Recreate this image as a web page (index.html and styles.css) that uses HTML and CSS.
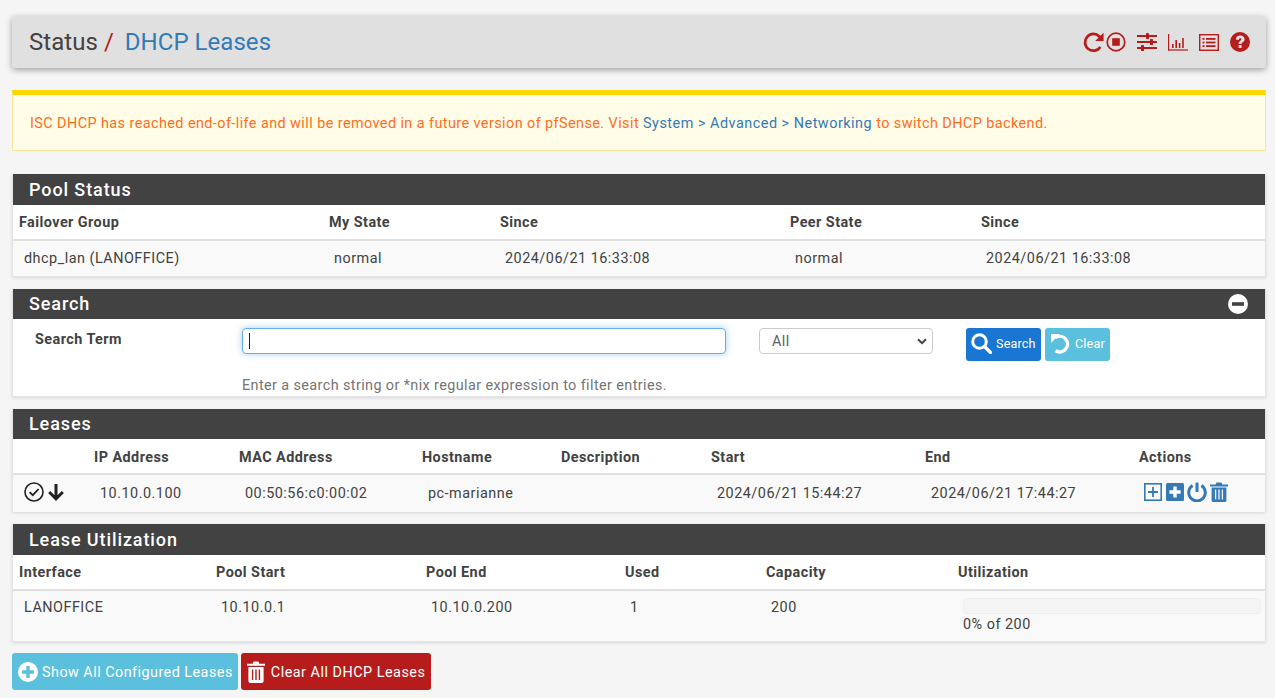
FILE: index.html
```html
<!DOCTYPE html>
<html lang="en">
<head>
<meta charset="utf-8">
<title>Status / DHCP Leases</title>
<link rel="stylesheet" href="styles.css">
</head>
<body>
<main class="page">
  <header class="crumbs">
    <h1 class="crumb-title"><span>Status</span><span class="crumb-sep">/</span><a class="crumb-link">DHCP Leases</a></h1>
    <nav class="crumb-icons">
      <svg class="ci ci-reload" viewBox="0 0 22 22"><path d="M17.6 15.2A8 8 0 1 1 16.6 5.2L19 7.6" fill="none" stroke="currentColor" stroke-width="2.6"/><path d="M20.6 1.6V9.6H12.6Z" fill="currentColor"/></svg>
      <svg class="ci ci-stop" viewBox="0 0 20 20"><circle cx="10" cy="10" r="8.8" fill="none" stroke="currentColor" stroke-width="1.7"/><rect x="6.2" y="6.2" width="7.6" height="7.6" fill="currentColor"/></svg>
      <svg class="ci ci-sliders" viewBox="0 0 20 18"><g fill="currentColor"><rect y="2" width="20" height="2"/><rect y="8" width="20" height="2"/><rect y="14" width="20" height="2"/><rect x="9" y="0" width="3" height="6" rx=".6"/><rect x="13" y="6" width="3" height="6" rx=".6"/><rect x="4" y="12" width="3" height="6" rx=".6"/></g></svg>
      <svg class="ci ci-chart" viewBox="0 0 20 17"><g fill="currentColor"><rect width="1.2" height="16.5"/><rect y="15.4" width="20" height="1.2"/><rect x="4" y="10" width="1.6" height="4"/><rect x="7.4" y="6" width="1.6" height="8"/><rect x="10.8" y="9" width="1.6" height="5"/><rect x="14.2" y="4" width="1.6" height="10"/></g></svg>
      <svg class="ci ci-list" viewBox="0 0 20 17"><rect x=".7" y=".7" width="18.6" height="15.6" fill="none" stroke="currentColor" stroke-width="1.4"/><g fill="currentColor"><rect x="3.5" y="4" width="2" height="1.8"/><rect x="3.5" y="7.6" width="2" height="1.8"/><rect x="3.5" y="11.2" width="2" height="1.8"/><rect x="7" y="4" width="9.5" height="1.8"/><rect x="7" y="7.6" width="9.5" height="1.8"/><rect x="7" y="11.2" width="9.5" height="1.8"/></g></svg>
      <svg class="ci ci-help" viewBox="0 0 20 20"><circle cx="10" cy="10" r="10" fill="currentColor"/><path d="M5.8 7.4C6 4.8 7.9 3.4 10.2 3.4 12.6 3.4 14.6 4.9 14.6 7.2 14.6 10 11.6 10 11.6 12H8.6C8.6 8.9 11.4 8.8 11.4 7.3 11.4 6.7 10.9 6.2 10.2 6.2 9.4 6.2 8.9 6.8 8.7 7.9Z" fill="#e0e0e0"/><rect x="8.6" y="13" width="3" height="3" fill="#e0e0e0"/></svg>
    </nav>
  </header>

  <div class="alert">ISC DHCP has reached end-of-life and will be removed in a future version of pfSense. Visit <a class="link">System &gt; Advanced &gt; Networking</a> to switch DHCP backend.</div>

  <section class="panel panel-pool">
    <h2 class="panel-head">Pool Status</h2>
    <table class="grid">
      <colgroup><col class="w310"><col class="w171"><col class="w290"><col class="w191"><col></colgroup>
      <thead><tr><th>Failover Group</th><th>My State</th><th>Since</th><th>Peer State</th><th>Since</th></tr></thead>
      <tbody><tr><td>dhcp_lan (LANOFFICE)</td><td>normal</td><td>2024/06/21 16:33:08</td><td>normal</td><td>2024/06/21 16:33:08</td></tr></tbody>
    </table>
  </section>

  <section class="panel panel-search">
    <h2 class="panel-head panel-head-s">Search
      <svg class="collapse" viewBox="0 0 20 20"><circle cx="10" cy="10" r="10" fill="#fff"/><rect x="4" y="8.2" width="12" height="3.6" fill="#424242"/></svg>
    </h2>
    <div class="search-body">
      <label class="search-label">Search Term</label>
      <div class="search-main">
        <div class="search-row">
          <div class="fake-input"><span class="caret"></span></div>
          <div class="fake-select">All<svg class="chev" viewBox="0 0 10 7"><path d="M1 1.2 5 5.2 9 1.2" fill="none" stroke="#444" stroke-width="2"/></svg></div>
          <div class="search-btns">
            <button class="btn btn-blue"><svg class="bi-search" viewBox="0 0 21 21"><circle cx="8.5" cy="8.5" r="6.8" fill="none" stroke="#fff" stroke-width="3"/><path d="M13.5 13.5 19.5 19.5" stroke="#fff" stroke-width="3.2" stroke-linecap="round"/></svg>Search</button>
            <button class="btn btn-info"><svg class="bi-undo" viewBox="0 0 21 21"><path d="M5.4 4.6A7.8 7.8 0 1 1 5.6 17.8" fill="none" stroke="#fff" stroke-width="3.4"/><path d="M1 1 10 1 1 10Z" fill="#fff"/></svg>Clear</button>
          </div>
        </div>
        <p class="help">Enter a search string or *nix regular expression to filter entries.</p>
      </div>
    </div>
  </section>

  <section class="panel panel-leases">
    <h2 class="panel-head panel-head-s">Leases</h2>
    <table class="grid">
      <colgroup><col class="w75"><col class="w145"><col class="w183"><col class="w139"><col class="w150"><col class="w214"><col class="w214"><col></colgroup>
      <thead><tr><th></th><th>IP Address</th><th>MAC Address</th><th>Hostname</th><th>Description</th><th>Start</th><th>End</th><th>Actions</th></tr></thead>
      <tbody><tr>
        <td class="cell-status"><span class="icon-row">
          <svg class="si-check" viewBox="0 0 20 20"><circle cx="10" cy="10" r="9" fill="none" stroke="#212121" stroke-width="1.6"/><path d="M5.6 10.2 8.8 13.2 14.6 7" fill="none" stroke="#212121" stroke-width="1.8"/></svg>
          <svg class="si-down" viewBox="0 0 18 18"><path d="M9 1V15.5M2.2 9 9 15.8 15.8 9" fill="none" stroke="#212121" stroke-width="3"/></svg>
        </span></td>
        <td>10.10.0.100</td><td>00:50:56:c0:00:02</td><td>pc-marianne</td><td></td><td>2024/06/21 15:44:27</td><td>2024/06/21 17:44:27</td>
        <td class="cell-actions"><span class="icon-row icon-actions">
          <svg class="ai-a" viewBox="0 0 18 18"><rect x=".8" y=".8" width="16.4" height="16.4" fill="none" stroke="#337ab7" stroke-width="1.6"/><path d="M9 4V14M4 9H14" stroke="#337ab7" stroke-width="1.8"/></svg>
          <svg class="ai-b" viewBox="0 0 18 18"><rect width="18" height="18" rx="1.5" fill="#337ab7"/><path d="M9 3.4V14.6M3.4 9H14.6" stroke="#fff" stroke-width="3.4"/></svg>
          <svg class="ai-c" viewBox="0 0 20 20"><path d="M5.6 3.6A8.3 8.3 0 1 0 14.4 3.6" fill="none" stroke="#337ab7" stroke-width="3"/><path d="M10 .6V10" stroke="#337ab7" stroke-width="3"/></svg>
          <svg class="ai-d" viewBox="0 0 18 20"><g fill="#337ab7"><path d="M0 2.6H5.6L6.6.6H11.4L12.4 2.6H18V4.4H0Z"/><path d="M1.6 5.4H16.4V18.4Q16.4 20 14.8 20H3.2Q1.6 20 1.6 18.4Z"/></g><path d="M5.6 7.6V17.4M9 7.6V17.4M12.4 7.6V17.4" stroke="#f9f9f9" stroke-width="1.3"/></svg>
        </span></td>
      </tr></tbody>
    </table>
  </section>

  <section class="panel panel-util">
    <h2 class="panel-head">Lease Utilization</h2>
    <table class="grid">
      <colgroup><col class="w197"><col class="w210"><col class="w199"><col class="w141"><col class="w192"><col></colgroup>
      <thead><tr><th>Interface</th><th>Pool Start</th><th>Pool End</th><th>Used</th><th>Capacity</th><th>Utilization</th></tr></thead>
      <tbody><tr><td>LANOFFICE</td><td>10.10.0.1</td><td>10.10.0.200</td><td>1</td><td>200</td><td class="cell-util"><div class="progress"></div><span>0% of 200</span></td></tr></tbody>
    </table>
  </section>

  <div class="actions">
    <button class="btn btn-lg btn-info"><svg class="li-plus" viewBox="0 0 20 20"><circle cx="10" cy="10" r="10" fill="#fff"/><path d="M10 4V16M4 10H16" stroke="#5bc0de" stroke-width="3.4"/></svg>Show All Configured Leases</button>
    <button class="btn btn-lg btn-red"><svg class="li-trash" viewBox="0 0 18 22"><g fill="#fff"><path d="M0 2.8H5.6L6.6.6H11.4L12.4 2.8H18V4.8H0Z"/><path d="M1.4 6H16.6V20Q16.6 22 14.6 22H3.4Q1.4 22 1.4 20Z"/></g><path d="M5.6 8.4V19M9 8.4V19M12.4 8.4V19" stroke="#b71c1c" stroke-width="1.4"/></svg>Clear All DHCP Leases</button>
  </div>
</main>
</body>
</html>
```
FILE: styles.css
```css
* { box-sizing: border-box; }
html, body { margin: 0; height: 698px; overflow: hidden; }
body {
  background: #f5f5f5;
  color: #424242;
  font: 14.4px/1.42857 Roboto, "Liberation Sans", sans-serif;
  letter-spacing: .45px;
}
.page { padding: 16px 9px 0 12px; display: flex; flex-direction: column; }

.crumbs {
  height: 52px;
  background: #e0e0e0;
  border-radius: 3px;
  box-shadow: 0 2px 6px rgba(0,0,0,.35);
  display: flex;
  align-items: center;
  justify-content: space-between;
  padding: 0 16px 0 17px;
}
.crumb-title { margin: 0; font-size: 24px; font-weight: 400; line-height: 1; color: #424242; display: flex; letter-spacing: .04px; }
.crumb-sep { color: #b71c1c; margin: 0 11px 0 6px; }
.crumb-link, .link { color: #337ab7; }
.crumb-icons { display: flex; align-items: center; color: #b71c1c; }
.ci { display: block; }
.ci-reload { width: 23px; height: 23px; }
.ci-stop { width: 20px; height: 20px; margin-left: 1px; }
.ci-sliders { width: 20px; height: 18px; margin-left: 11px; }
.ci-chart { width: 20px; height: 17px; margin-left: 11px; }
.ci-list { width: 20px; height: 17px; margin-left: 11px; }
.ci-help { width: 20px; height: 20px; margin-left: 11px; }

.alert {
  margin-top: 22px;
  height: 61px;
  background: #fffde7;
  border: 1px solid #ffe39b;
  border-top: 5px solid #ffd600;
  color: #ff6d20;
  padding: 0 17px;
  line-height: 57px;
  letter-spacing: .43px;
}
.link { letter-spacing: .51px; }

.panel {
  background: #fff;
  border: 1px solid #e4e4e4;
  box-shadow: 0 1px 3px rgba(0,0,0,.12);
  border-top: 0;
}
.panel-pool { margin-top: 23px; height: 103px; }
.panel-search { margin-top: 12px; height: 108px; }
.panel-leases { margin-top: 12px; height: 103px; }
.panel-util { margin-top: 12px; height: 118px; }

.panel-head {
  margin: 0;
  height: 31px;
  background: #424242;
  color: #fff;
  font-size: 18px;
  font-weight: 500;
  line-height: 31px;
  letter-spacing: .9px;
  padding-left: 16px;
  position: relative;
}
.panel-head-s { height: 30px; line-height: 30px; }
.collapse { position: absolute; top: 5px; right: 17px; width: 20px; height: 20px; }

.grid { width: 100%; border-collapse: collapse; table-layout: fixed; }
.grid th {
  text-align: left;
  font-weight: 700;
  font-size: 14.4px;
  color: #424242;
  height: 35px;
  padding: 2px 6px 0;
  border-bottom: 2px solid #e0e0e0;
}
.grid td {
  padding: 2px 6px 0 11px;
  height: 36px;
  background: #f9f9f9;
  color: #424242;
  letter-spacing: .5px;
}
.panel-leases .grid th { padding-top: 4px; }
.panel-leases .grid td { height: 38px; padding-left: 12px; }
.panel-leases .grid .cell-status, .panel-leases .grid .cell-actions { padding-left: 11px; }
.panel-util .grid td { height: 51px; vertical-align: top; padding-top: 7px; }

.w310 { width: 310px; } .w171 { width: 171px; } .w290 { width: 290px; } .w191 { width: 191px; }
.w75 { width: 75px; } .w145 { width: 145px; } .w183 { width: 183px; } .w139 { width: 139px; }
.w150 { width: 150px; } .w214 { width: 214px; }
.w197 { width: 197px; } .w210 { width: 210px; } .w199 { width: 199px; } .w141 { width: 141px; } .w192 { width: 192px; }

.search-body { display: flex; padding-top: 9px; }
.search-label { width: 229px; padding: 2px 0 0 22px; font-weight: 700; line-height: 20px; color: #424242; }
.search-row { display: flex; align-items: flex-start; }
.fake-input {
  width: 484px; height: 26px;
  border: 1px solid #66afe9; border-radius: 4px; background: #fff;
  box-shadow: 0 0 7px rgba(102,175,233,.6);
  padding: 4px 6px;
}
.caret { display: block; width: 1px; height: 16px; background: #212121; }
.fake-select {
  width: 174px; height: 26px; margin-left: 33px;
  border: 1px solid #ccc; border-radius: 4px; background: #fff;
  padding: 1px 12px 0; line-height: 24px; color: #616161;
  display: flex; justify-content: space-between; align-items: center;
}
.chev { width: 10px; height: 7px; margin-right: -7px; }
.search-btns { display: flex; gap: 4px; margin-left: 33px; }
.btn {
  display: inline-flex; align-items: center;
  border: 0; border-radius: 3px; color: #fff;
  font: 400 12.6px Roboto, "Liberation Sans", sans-serif;
  letter-spacing: .15px;
  height: 33px; padding: 0 5px 2px;
}
.btn svg { flex: none; }
.btn-blue { background: #1976d2; width: 75px; }
.btn-info { background: #5bc0de; }
.btn-red { background: #b71c1c; }
.search-btns .btn-info { width: 65px; }
.bi-search { width: 21px; height: 21px; margin-right: 4px; }
.bi-undo { width: 21px; height: 21px; margin-right: 4px; }
.help { margin: 15px 0 0; color: #757575; line-height: 20px; letter-spacing: .4px; }

.icon-row { display: flex; align-items: center; margin-bottom: 5px; }
.si-check { width: 20px; height: 20px; }
.si-down { width: 18px; height: 18px; margin-left: 3px; }
.ai-a { width: 18px; height: 18px; }
.ai-b { width: 18px; height: 18px; margin-left: 4px; }
.ai-c { width: 20px; height: 20px; margin-left: 3px; }
.ai-d { width: 18px; height: 20px; margin-left: 3px; }

.progress { width: 298px; height: 16px; background: #f5f5f5; border: 1px solid #eee; border-radius: 4px; }
.cell-util span { display: block; margin-top: 1px; line-height: 20px; }

.actions { display: flex; gap: 3px; margin-top: 11px; }
.btn-lg { font-size: 14.4px; letter-spacing: .46px; height: 37px; padding: 1px 5px 0 6px; }
.btn-lg.btn-red { letter-spacing: .5px; padding-right: 6px; }
.li-plus { width: 20px; height: 20px; margin-right: 4px; }
.li-trash { width: 18px; height: 22px; margin-right: 6px; }
```
